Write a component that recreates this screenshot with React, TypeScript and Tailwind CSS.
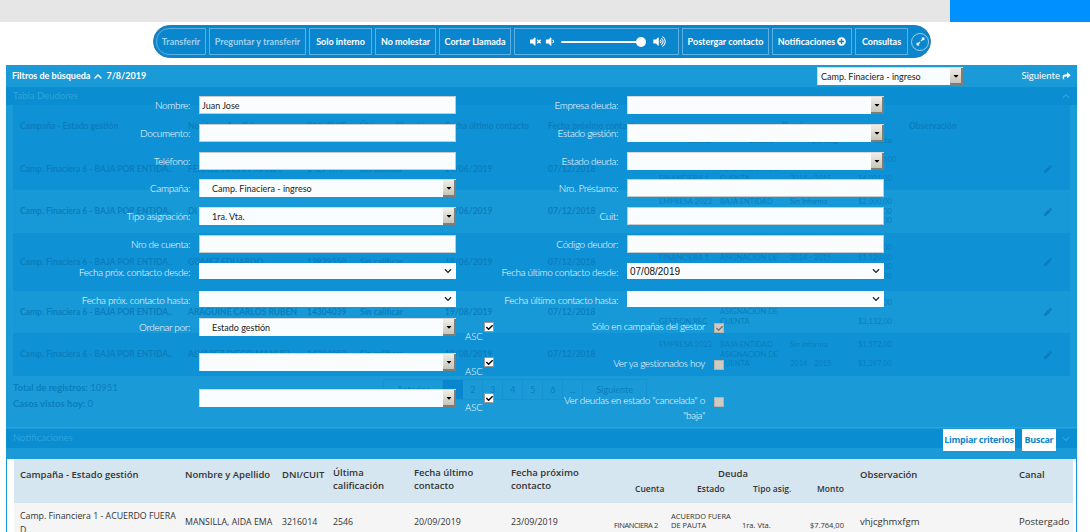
import React from 'react';
import { FaChevronUp, FaChevronDown, FaShare, FaPlusCircle, FaVolumeMute, FaVolumeDown, FaVolumeUp, FaExpandAlt, FaPen, FaCheck, FaCaretDown } from 'react-icons/fa';

const bgHeaders = [
  { label: 'Campaña - Estado gestión', w: 'w-[168px]' },
  { label: 'Nombre y Apellido', w: 'w-[119px]' },
  { label: 'DNI/CUIT', w: 'w-[53px]' },
  { label: 'Última calificación', w: 'w-[85px]' },
  { label: 'Fecha último contacto', w: 'w-[103px]' },
  { label: 'Fecha próximo contacto', w: 'w-[111px]' },
];

const bgRows = [
  {
    h: 'h-[42px]', bg: 'bg-[#0f92d5]', cells: ['Camp. Finaciera 6 - BAJA POR ENTIDA..', 'FERNEZ JULIAN MARIA', '14294???', 'Sin calificar', '14/06/2019', '07/12/2018'],
    debts: [['EMPRESA 2111', 'BAJA ENTIDAD', 'Sin Informa', '$11.120,00'], ['', 'ASIGNACION DE', '', ''], ['FINANCIERA 1', 'CUENTA', '2014 - 2015', '$4.021,00']],
  },
  {
    h: 'h-[43px]', bg: 'bg-[#1799d7]', cells: ['Camp. Finaciera 6 - BAJA POR ENTIDA..', 'DI LAGO CLAUDIA MARIA', '14230961', 'Sin calificar', '14/06/2019', '07/12/2018'],
    debts: [['EMPRESA 2023', 'BAJA ENTIDAD', 'Sin Informa', '$2.000,00'], ['FINANCIERA 1', 'CUENTA', '1ra. Vta.', '$1.717,00'], ['FINANCIERA 1', 'CUENTA', '1ra. Vta.', '$4.726,00']],
  },
  {
    h: 'h-[58px]', bg: 'bg-[#0f92d5]', cells: ['Camp. Finaciera 6 - BAJA POR ENTIDA..', 'GOMEZ EDUARDO', '12829550', 'Sin calificar', '19/06/2019', '07/12/2018'],
    debts: [['EMPRESA 2023', 'BAJA ENTIDAD', 'Sin Informa', '$3.228,00'], ['FINANCIERA 1', 'ASIGNACION DE', '2014 - 2015', '$1.120,00'], ['EMPRESA 2023', 'CUENTA', 'Sin Informa', '$1.200,00'], ['FINANCIERA 2', 'BAJA ENTIDAD', 'Sin Informa', '$1.310,00']],
  },
  {
    h: 'h-[42px]', bg: 'bg-[#1799d7]', cells: ['Camp. Finaciera 6 - BAJA POR ENTIDA..', 'ARAGUINE CARLOS RUBEN', '14304039', 'Sin calificar', '19/08/2019', '07/12/2018'],
    debts: [['EMPRESA 2023', 'BAJA ENTIDAD', 'Sin Informa', '$3.120,00'], ['', 'ASIGNACION DE', '', ''], ['GESTION REC', 'CUENTA', '', '$3.132,00']],
  },
  {
    h: 'h-[43px]', bg: 'bg-[#0f92d5]', cells: ['Camp. Finaciera 6 - BAJA POR ENTIDA..', 'ALVAREZ DIEGO MANUEL', '14304050', 'Sin calificar', '19/08/2019', '07/12/2018'],
    debts: [['EMPRESA 2023', 'BAJA ENTIDAD', 'Sin Informa', '$1.572,00'], ['', 'ASIGNACION DE', '', ''], ['', 'CUENTA', '2014 - 2015', '$1.397,00']],
  },
];

function ToolButton({ w, dim, rounded, children }: { w: string; dim?: boolean; rounded?: boolean; children: React.ReactNode }) {
  return (
    <div className={`${w} h-[27px] shrink-0 flex items-center justify-center border border-[#5cb1e0] text-[9px] font-bold whitespace-nowrap ${rounded ? 'rounded-l-[13px]' : ''} ${dim ? 'text-[#9fd2ee]' : 'text-white'}`}>
      {children}
    </div>
  );
}

function Toolbar() {
  return (
    <div className="flex pt-[3px] pl-[153px]">
      <div className="w-[778px] h-[33px] rounded-[17px] bg-[#0a86cf] border border-[#2c79ad] flex items-center gap-[3px] pl-[2px]">
        <ToolButton w="w-[50px]" dim rounded>Transferir</ToolButton>
        <ToolButton w="w-[97px]" dim>Preguntar y transferir</ToolButton>
        <ToolButton w="w-[63px]">Solo interno</ToolButton>
        <ToolButton w="w-[61px]">No molestar</ToolButton>
        <ToolButton w="w-[72px]">Cortar Llamada</ToolButton>
        <div className="w-[165px] h-[27px] shrink-0 flex items-center border border-[#5cb1e0] pl-[14px] text-white">
          <FaVolumeMute className="w-[13px] h-[11px]" />
          <FaVolumeDown className="w-[10px] h-[11px] ml-[3px]" />
          <div className="relative w-[81px] h-[2px] bg-white ml-[6px] rounded-full">
            <div className="absolute right-[-4px] top-[-4px] w-[10px] h-[10px] rounded-full bg-white" />
          </div>
          <FaVolumeUp className="w-[13px] h-[11px] ml-[11px]" />
        </div>
        <ToolButton w="w-[87px]">Postergar contacto</ToolButton>
        <ToolButton w="w-[80px]">
          <span>Notificaciones</span>
          <FaPlusCircle className="w-[9px] h-[9px] ml-[2px]" />
        </ToolButton>
        <ToolButton w="w-[53px]">Consultas</ToolButton>
        <div className="w-[18px] h-[18px] shrink-0 rounded-full border border-[#9ccde9] flex items-center justify-center text-white">
          <FaExpandAlt className="w-[9px] h-[9px]" />
        </div>
      </div>
    </div>
  );
}

function BackgroundTable() {
  return (
    <div className="mx-[7px] text-[#0b7dbd] text-[8.5px] font-bold">
      <div className="h-[43px] flex pl-[7px] pt-[15px] bg-[#0f92d5]">
        {bgHeaders.map(h => <div key={h.label} className={`${h.w} shrink-0 whitespace-nowrap`}>{h.label}</div>)}
        <div className="relative w-[250px] shrink-0">
          <span className="absolute left-[123px] top-0">Deuda</span>
          <span className="absolute left-[27px] top-[14px] text-[8px]">Cuenta</span>
          <span className="absolute left-[90px] top-[14px] text-[8px]">Estado</span>
          <span className="absolute left-[147px] top-[14px] text-[8px]">Tipo asig.</span>
          <span className="absolute left-[209px] top-[14px] text-[8px]">Monto</span>
        </div>
        <div>Observación</div>
      </div>
      {bgRows.map((row, i) => (
        <div key={i} className={`${row.h} ${row.bg} flex items-center pl-[7px]`}>
          {row.cells.map((c, j) => (
            <div key={j} className={`${bgHeaders[j].w} shrink-0 whitespace-nowrap`}>{c}</div>
          ))}
          <div className="w-[250px] shrink-0 text-[7.5px] font-normal leading-[9.5px]">
            {row.debts.map((d, k) => (
              <div key={k} className="flex">
                <span className="w-[61px] shrink-0">{d[0]}</span>
                <span className="w-[70px] shrink-0">{d[1]}</span>
                <span className="w-[68px] shrink-0">{d[2]}</span>
                <span>{d[3]}</span>
              </div>
            ))}
          </div>
          <div className="flex-1" />
          <FaPen className="w-[8px] h-[8px] mr-[18px]" />
        </div>
      ))}
    </div>
  );
}

function PagerAndTotals() {
  return (
    <div className="h-[51px] flex justify-between pl-[7px] text-[#0b7dbd] text-[9.5px]">
      <div className="pt-[4px] leading-[15px]">
        <p><b>Total de registros:</b> 10951</p>
        <p className="mt-[1px]"><b>Casos vistos hoy:</b> 0</p>
      </div>
      <div className="flex h-[21px] mt-[3px] mr-[430px] items-stretch border border-[#1793d2] text-[9px]">
        <span className="px-[13px] flex items-center border-r border-[#1793d2]">Anterior</span>
        <span className="w-[20px] bg-[#0a86cf]" />
        {['2', '3', '4', '5', '6', '...'].map(n => (
          <span key={n} className="w-[20px] flex items-center justify-center border-r border-[#1793d2]">{n}</span>
        ))}
        <span className="px-[13px] flex items-center">Siguiente</span>
      </div>
    </div>
  );
}

function TextField({ value }: { value?: string }) {
  return (
    <input
      readOnly
      value={value ?? ''}
      className="w-[257px] h-[18px] shrink-0 bg-white/[0.98] border border-[#c9c9c9] px-[2px] text-[9px] text-[#222] outline-none"
    />
  );
}

function OldSelect({ value, w = 'w-[257px]', pad = 'pl-[12px]' }: { value?: string; w?: string; pad?: string }) {
  return (
    <div className={`${w} h-[18px] shrink-0 bg-white/[0.98] flex items-center justify-between text-[9px] font-normal text-[#222] border-l border-t border-[#d8d8d8]`}>
      <span className={pad}>{value}</span>
      <div className="w-[13px] h-[17px] bg-gradient-to-b from-[#f0eee8] to-[#c8c5ba] border-r-2 border-b-2 border-[#807d74] flex items-center justify-center">
        <FaCaretDown className="w-[8px] h-[8px] text-black" />
      </div>
    </div>
  );
}

function DateSelect({ value }: { value?: string }) {
  return (
    <div className="w-[257px] h-[16px] shrink-0 bg-white/[0.98] flex items-center justify-between px-[3px] text-[10px] text-[#111] font-['Liberation_Sans',sans-serif]">
      <span>{value}</span>
      <FaChevronDown className="w-[8px] h-[8px] mr-[1px] text-[#222]" />
    </div>
  );
}

function Field({ label, pitch, width, children }: { label: string; pitch: string; width: string; children: React.ReactNode }) {
  return (
    <div className={`${pitch} flex items-start`}>
      <label className={`${width} shrink-0 pr-[9px] text-right text-[10px] tracking-[-0.35px] leading-[18px] font-light text-white whitespace-nowrap`}>{label}</label>
      {children}
    </div>
  );
}

function AscBox() {
  return (
    <div className="relative w-[40px] h-[18px] ml-[9px]">
      <span className="absolute left-0 top-[14px] text-[9.5px] font-light text-white leading-none">ASC</span>
      <span className="absolute left-[19px] top-[4px] w-[10px] h-[10px] bg-white border border-[#999] flex items-center justify-center">
        <FaCheck className="w-[7px] h-[7px] text-black" />
      </span>
    </div>
  );
}

function CheckOption({ label, checked, pitch }: { label: React.ReactNode; checked?: boolean; pitch: string }) {
  return (
    <div className={`${pitch} flex items-start`}>
      <div className="w-[210px] shrink-0 pr-[5px] text-right text-[10px] tracking-[-0.35px] leading-[15px] font-light text-white">{label}</div>
      <span className="w-[10px] h-[10px] mt-[4px] ml-[4px] bg-[#cfcbc3] border border-[#b5b2aa] flex items-center justify-center">
        {checked && <FaCheck className="w-[7px] h-[7px] text-[#77756f]" />}
      </span>
    </div>
  );
}

function FilterForm() {
  return (
    <div className="absolute left-0 right-0 top-[31px] h-[355px] flex flex-col">
      <div className="flex">
        <div className="w-[494px] shrink-0">
          <Field label="Nombre:" pitch="h-[28px]" width="w-[193px]"><TextField value="Juan Jose" /></Field>
          <Field label="Documento:" pitch="h-[28px]" width="w-[193px]"><TextField /></Field>
          <Field label="Teléfono:" pitch="h-[27px]" width="w-[193px]"><TextField /></Field>
          <Field label="Campaña:" pitch="h-[28px]" width="w-[193px]"><OldSelect value="Camp. Finaciera - ingreso" /></Field>
          <Field label="Tipo asignación:" pitch="h-[28px]" width="w-[193px]"><OldSelect value="1ra. Vta." /></Field>
          <Field label="Nro de cuenta:" pitch="h-[28px]" width="w-[193px]"><TextField /></Field>
          <Field label="Fecha próx. contacto desde:" pitch="h-[28px]" width="w-[193px]"><DateSelect /></Field>
          <Field label="Fecha próx. contacto hasta:" pitch="h-[27px]" width="w-[193px]"><DateSelect /></Field>
          <Field label="Ordenar por:" pitch="h-[35px]" width="w-[193px]"><OldSelect value="Estado gestión" /><AscBox /></Field>
          <Field label="" pitch="h-[36px]" width="w-[193px]"><OldSelect /><AscBox /></Field>
          <Field label="" pitch="h-[18px]" width="w-[193px]"><OldSelect /><AscBox /></Field>
        </div>
        <div className="flex-1">
          <Field label="Empresa deuda:" pitch="h-[28px]" width="w-[127px]"><OldSelect /></Field>
          <Field label="Estado gestión:" pitch="h-[28px]" width="w-[127px]"><OldSelect /></Field>
          <Field label="Estado deuda:" pitch="h-[27px]" width="w-[127px]"><OldSelect /></Field>
          <Field label="Nro. Préstamo:" pitch="h-[28px]" width="w-[127px]"><TextField /></Field>
          <Field label="Cuit:" pitch="h-[28px]" width="w-[127px]"><TextField /></Field>
          <Field label="Código deudor:" pitch="h-[28px]" width="w-[127px]"><TextField /></Field>
          <Field label="Fecha último contacto desde:" pitch="h-[28px]" width="w-[127px]"><DateSelect value="07/08/2019" /></Field>
          <Field label="Fecha último contacto hasta:" pitch="h-[28px]" width="w-[127px]"><DateSelect /></Field>
          <CheckOption label="Sólo en campañas del gestor" checked pitch="h-[37px]" />
          <CheckOption label="Ver ya gestionados hoy" pitch="h-[37px]" />
          <CheckOption label={<>Ver deudas en estado "cancelada" o<br />"baja"</>} pitch="h-[30px]" />
        </div>
      </div>
      <div className="mt-auto flex justify-end gap-[7px] pr-[21px] text-[9px] font-bold text-[#0a86cf] whitespace-nowrap font-['Open_Sans',sans-serif]">
        <div className="w-[72px] h-[22px] bg-white flex items-center justify-center tracking-[-0.3px]">Limpiar criterios</div>
        <div className="w-[34px] h-[22px] bg-white flex items-center justify-center tracking-[-0.3px]">Buscar</div>
      </div>
    </div>
  );
}

function ResultCard() {
  return (
    <div className="mx-px h-[73px] bg-white pl-[7px] pr-[3px] text-[#333] font-['Open_Sans',sans-serif]">
      <div className="h-[44px] bg-[#d6e6f0] relative font-semibold text-[9.5px] leading-[13px]">
        <div className="flex pt-[7px]">
          <div className="w-[171px] pl-[6px] pt-[2px] shrink-0">Campaña - Estado gestión</div>
          <div className="w-[97px] shrink-0 pt-[2px] whitespace-nowrap">Nombre y Apellido</div>
          <div className="w-[51px] shrink-0 pt-[2px]">DNI/CUIT</div>
          <div className="w-[81px] shrink-0 whitespace-pre-line">{'Última\ncalificación'}</div>
          <div className="w-[97px] shrink-0 whitespace-pre-line">{'Fecha último\ncontacto'}</div>
          <div className="w-[100px] shrink-0 whitespace-pre-line">{'Fecha próximo\ncontacto'}</div>
          <div className="relative w-[249px] shrink-0 text-[8.5px]">
            <span className="absolute left-[107px] top-[1px] text-[9.5px]">Deuda</span>
            <span className="absolute left-[24px] top-[16px]">Cuenta</span>
            <span className="absolute left-[86px] top-[16px]">Estado</span>
            <span className="absolute left-[142px] top-[16px]">Tipo asig.</span>
            <span className="absolute left-[206px] top-[16px]">Monto</span>
          </div>
          <div className="w-[159px] shrink-0 pt-[2px]">Observación</div>
          <div className="pt-[2px]">Canal</div>
        </div>
      </div>
      <div className="h-[29px] bg-[#f5f5f5] flex text-[8.8px] leading-[14px]">
        <div className="w-[171px] pl-[6px] pt-[6px] shrink-0">Camp. Financiera 1 - ACUERDO FUERA<br />D..</div>
        <div className="w-[97px] pt-[12px] shrink-0 whitespace-nowrap">MANSILLA, AIDA EMA</div>
        <div className="w-[51px] pt-[12px] shrink-0">3216014</div>
        <div className="w-[81px] pt-[12px] shrink-0">2546</div>
        <div className="w-[97px] pt-[12px] shrink-0">20/09/2019</div>
        <div className="w-[100px] pt-[12px] shrink-0">23/09/2019</div>
        <div className="w-[249px] shrink-0 flex text-[7.5px] leading-[9px]">
          <span className="w-[60px] pl-[3px] pt-[18px] shrink-0 whitespace-nowrap tracking-[-0.4px]">FINANCIERA 2</span>
          <span className="w-[71px] pt-[9px] shrink-0">ACUERDO FUERA DE PAUTA</span>
          <span className="w-[68px] pt-[18px] shrink-0">1ra. Vta.</span>
          <span className="pt-[18px] whitespace-nowrap">$7.764,00</span>
        </div>
        <div className="w-[159px] pt-[12px] shrink-0 text-[9.5px]">vhjcghmxfgm</div>
        <div className="pt-[12px] text-[9.5px]">Postergado</div>
      </div>
    </div>
  );
}

export default function App() {
  return (
    <div className="h-[532px] overflow-hidden bg-white font-['Lato',sans-serif]">
      <div className="h-[22px] bg-[#e6e6e6] flex justify-end">
        <div className="w-[140px] bg-[#0090ff]" />
      </div>
      <Toolbar />
      <section className="relative mt-[7px] mx-[6px] mr-[13px] bg-[#1a9bd7]">
        <header className="h-[22px] flex items-center justify-between pl-[6px] pr-[6px] text-[9px] font-bold text-white">
          <div className="flex items-center gap-[3px]">
            <span>Filtros de búsqueda</span>
            <FaChevronUp className="w-[10px] h-[9px]" />
            <span>7/8/2019</span>
          </div>
          <div className="flex items-center">
            <OldSelect value="Camp. Finaciera - ingreso" w="w-[146px]" pad="pl-[3px]" />
            <span className="w-[60px] ml-[48px] font-normal text-right flex items-center justify-end gap-[2px] text-[9.5px]">Siguiente <FaShare className="w-[9px] h-[8px]" /></span>
          </div>
        </header>
        <div className="h-[18px] bg-[#0a8dd1] flex items-center justify-between px-[7px] text-[9.5px] text-[#2ea3da]">
          <span>Tabla Deudores</span>
          <FaChevronUp className="w-[8px] h-[8px]" />
        </div>
        <BackgroundTable />
        <PagerAndTotals />
        <div className="h-[2px] border-t border-[#2ba3dc]" />
        <div className="h-[19px] bg-[#0a8dd1] flex items-center justify-between px-[7px] text-[9.5px] text-[#2ea3da]">
          <span>Notificaciones</span>
          <FaChevronDown className="w-[8px] h-[8px]" />
        </div>
        <div className="h-[11px]" />
        <ResultCard />
        <FilterForm />
      </section>
    </div>
  );
}
